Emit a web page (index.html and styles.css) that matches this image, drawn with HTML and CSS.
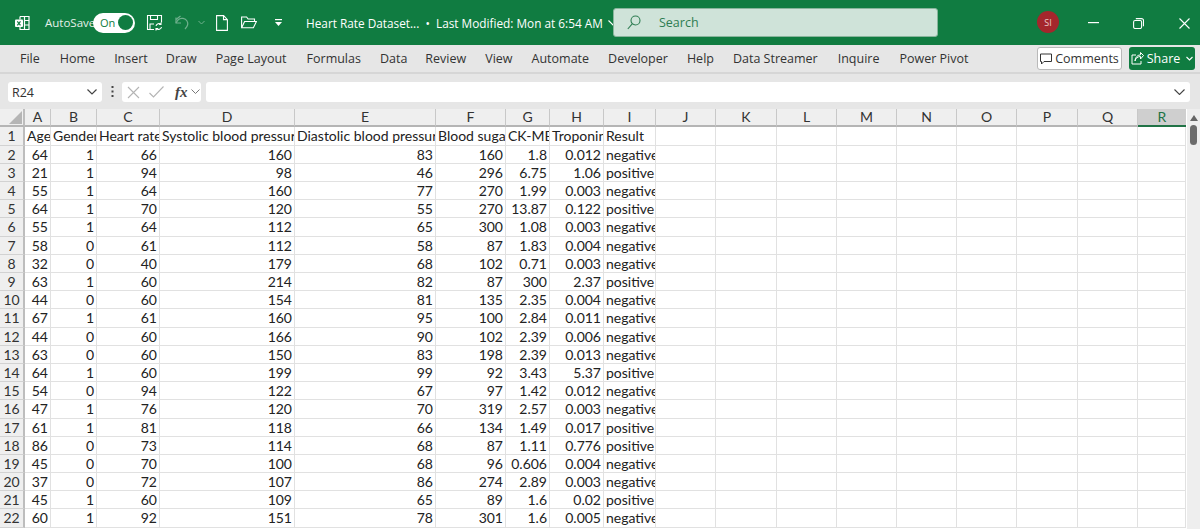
FILE: index.html
```html
<!DOCTYPE html>
<html lang="en">
<head>
<meta charset="utf-8">
<title>Heart Rate Dataset - Excel</title>
<link rel="stylesheet" href="styles.css">
</head>
<body>
<div class="app">
<header class="titlebar">
  <svg class="ico-app" width="18" height="18" viewBox="0 0 18 18" fill="none" stroke="#fff" stroke-width="1.2"><path d="M6 2.5h9v13H6v-3"/><path d="M6 2.5v3M10.500 2.500v13M10.500 6.500H15M10.500 11H15"/><rect x="1" y="5.500" width="8" height="7.500" rx="1" fill="#fff" stroke="none"/><path d="M3.300 7.300l3.200 4M6.500 7.300l-3.200 4" stroke="#107c41"/></svg>
  <span class="autosave">AutoSave</span>
  <span class="toggle"><span class="toggle-text">On</span><span class="toggle-knob"></span></span>
  <svg class="ico-save" width="17" height="17" viewBox="0 0 17 17" fill="none" stroke="#fff" stroke-width="1.100"><path d="M8 15.500H1.500v-14h14v7"/><path d="M4.500 1.500v4h7v-4M4 15v-5h4"/><path d="M10 12a3 3 0 0 1 5-1.500M15.500 13a3 3 0 0 1-5 1.500M15 8.500v2h-2M10 16.500v-2h2"/></svg>
  <svg class="ico-redo" width="16" height="16" viewBox="0 0 16 16" fill="none" stroke="#6fb08d" stroke-width="1.200"><path d="M1 4.500l4.500-3.500 0 0M10 14c3-3 3.500-5.500 2-8S6 2 3 5L1 8"/><path d="M1 2.500V8h5"/></svg>
  <svg class="ico-chev-dim" width="7" height="5" viewBox="0 0 7 5" fill="none" stroke="#6fb08d"><path d="M.5 1l3 3 3-3"/></svg>
  <svg class="ico-new" width="12" height="16" viewBox="0 0 12 16" fill="none" stroke="#fff" stroke-width="1.100"><path d="M.6.600h7l3.800 4v10.800H.6zM7.500.600v4h3.900"/></svg>
  <svg class="ico-open" width="16" height="13" viewBox="0 0 16 13" fill="none" stroke="#fff" stroke-width="1.100"><path d="M.6 11.500V1h5l1.500 2h6.400v2.500"/><path d="M.6 11.800l3-6.300h11.800l-3 6.300z"/></svg>
  <svg class="ico-more" width="9" height="8" viewBox="0 0 9 8" fill="#fff"><rect x="1" y="0" width="7" height="1.200"/><path d="M1 3h7L4.500 7z"/></svg>
  <span class="doc-title">Heart Rate Dataset...&nbsp; •&nbsp; Last Modified: Mon at 6:54 AM</span>
  <svg class="ico-chev-title" width="10" height="6" viewBox="0 0 10 6" fill="none" stroke="#fff" stroke-width="1.100"><path d="M.5.500l4.500 4.500 4.500-4.500"/></svg>
  <div class="search">
    <svg width="14" height="15" viewBox="0 0 14 15" fill="none" stroke="#2e7d52" stroke-width="1.100"><circle cx="8.500" cy="5.500" r="4.500"/><path d="M5.200 8.800L.8 14"/></svg>
    <span>Search</span>
  </div>
  <span class="avatar">SI</span>
  <svg class="ico-min" width="11" height="2" viewBox="0 0 11 2" fill="#fff"><rect width="11" height="1.200"/></svg>
  <svg class="ico-restore" width="11" height="11" viewBox="0 0 11 11" fill="none" stroke="#fff" stroke-width="1.100"><rect x=".6" y="2.500" width="8" height="8" rx="1.500"/><path d="M2.800.6h5.700a2 2 0 0 1 2 2v5.700"/></svg>
  <svg class="ico-close" width="11" height="11" viewBox="0 0 11 11" fill="none" stroke="#fff" stroke-width="1.100"><path d="M.5.500l10 10M10.500.500l-10 10"/></svg>
</header>

<nav class="tabs">
  <span class="tab t-file">File</span>
  <span class="tab t-home">Home</span>
  <span class="tab t-insert">Insert</span>
  <span class="tab t-draw">Draw</span>
  <span class="tab t-layout">Page Layout</span>
  <span class="tab t-formulas">Formulas</span>
  <span class="tab t-data">Data</span>
  <span class="tab t-review">Review</span>
  <span class="tab t-view">View</span>
  <span class="tab t-automate">Automate</span>
  <span class="tab t-dev">Developer</span>
  <span class="tab t-help">Help</span>
  <span class="tab t-stream">Data Streamer</span>
  <span class="tab t-inquire">Inquire</span>
  <span class="tab t-pivot">Power Pivot</span>
  <button class="btn-comments"><svg width="12" height="12" viewBox="0 0 12 12" fill="none" stroke="#333" stroke-width="1"><path d="M.5 1h11v7.500H4L1.500 11V8.500h-1z"/></svg>Comments</button>
  <button class="btn-share"><svg width="13" height="13" viewBox="0 0 13 13" fill="none" stroke="#fff" stroke-width="1"><path d="M5 3H1v9h9V9"/><path d="M4 9c.500-3 3-4.500 5.500-4.500V7L12.500 3.500 9.500.5v2.300C6 3 4 6 4 9z"/></svg>Share<svg class="share-chev" width="7" height="5" viewBox="0 0 7 5" fill="none" stroke="#fff" stroke-width="1.100"><path d="M.5 1l3 3 3-3"/></svg></button>
</nav>

<section class="formula">
  <div class="namebox"><span>R24</span><svg width="10" height="6" viewBox="0 0 10 6" fill="none" stroke="#444" stroke-width="1.200"><path d="M.5.500l4.500 4.500 4.500-4.500"/></svg></div>
  <svg class="dots" width="3" height="11" viewBox="0 0 3 11" fill="#444"><rect x=".5" width="2" height="2"/><rect x=".5" y="4.500" width="2" height="2"/><rect x=".5" y="9" width="2" height="2"/></svg>
  <div class="fxbox">
    <svg width="13" height="13" viewBox="0 0 13 13" fill="none" stroke="#b4b4b4" stroke-width="1.100"><path d="M1 1l11 11M12 1L1 12"/></svg>
    <svg width="15" height="12" viewBox="0 0 15 12" fill="none" stroke="#b4b4b4" stroke-width="1.100"><path d="M.5 7l4 4L14.500.5"/></svg>
    <span class="fx">fx</span>
    <svg width="9" height="6" viewBox="0 0 9 6" fill="none" stroke="#777" stroke-width="1"><path d="M.5.500l4 4 4-4"/></svg>
  </div>
  <div class="inputbox"><svg width="11" height="6" viewBox="0 0 11 6" fill="none" stroke="#444" stroke-width="1.100"><path d="M.5.500l5 5 5-5"/></svg></div>
</section>

<main class="sheet">
  <div class="grid">
    <div class="row head">
      <span class="corner"><svg width="13" height="13" viewBox="0 0 13 13" fill="#b5b5b5"><path d="M13 0v13H0z"/></svg></span>
      <b>A</b><b>B</b><b>C</b><b>D</b><b>E</b><b>F</b><b>G</b><b>H</b><b>I</b><b>J</b><b>K</b><b>L</b><b>M</b><b>N</b><b>O</b><b>P</b><b>Q</b><b class="sel">R</b>
    </div>
    <div class="row r1"><em>1</em><span>Age</span><span>Gender</span><span>Heart rate</span><span>Systolic blood pressure</span><span>Diastolic blood pressure</span><span>Blood sugar</span><span>CK-MB</span><span>Troponin</span><span>Result</span><i></i><i></i><i></i><i></i><i></i><i></i><i></i><i></i><i></i></div>
    <div class="row"><em>2</em><u>64</u><u>1</u><u>66</u><u>160</u><u>83</u><u>160</u><u>1.8</u><u>0.012</u><span>negative</span><i></i><i></i><i></i><i></i><i></i><i></i><i></i><i></i><i></i></div>
    <div class="row"><em>3</em><u>21</u><u>1</u><u>94</u><u>98</u><u>46</u><u>296</u><u>6.75</u><u>1.06</u><span>positive</span><i></i><i></i><i></i><i></i><i></i><i></i><i></i><i></i><i></i></div>
    <div class="row"><em>4</em><u>55</u><u>1</u><u>64</u><u>160</u><u>77</u><u>270</u><u>1.99</u><u>0.003</u><span>negative</span><i></i><i></i><i></i><i></i><i></i><i></i><i></i><i></i><i></i></div>
    <div class="row"><em>5</em><u>64</u><u>1</u><u>70</u><u>120</u><u>55</u><u>270</u><u>13.87</u><u>0.122</u><span>positive</span><i></i><i></i><i></i><i></i><i></i><i></i><i></i><i></i><i></i></div>
    <div class="row"><em>6</em><u>55</u><u>1</u><u>64</u><u>112</u><u>65</u><u>300</u><u>1.08</u><u>0.003</u><span>negative</span><i></i><i></i><i></i><i></i><i></i><i></i><i></i><i></i><i></i></div>
    <div class="row"><em>7</em><u>58</u><u>0</u><u>61</u><u>112</u><u>58</u><u>87</u><u>1.83</u><u>0.004</u><span>negative</span><i></i><i></i><i></i><i></i><i></i><i></i><i></i><i></i><i></i></div>
    <div class="row"><em>8</em><u>32</u><u>0</u><u>40</u><u>179</u><u>68</u><u>102</u><u>0.71</u><u>0.003</u><span>negative</span><i></i><i></i><i></i><i></i><i></i><i></i><i></i><i></i><i></i></div>
    <div class="row"><em>9</em><u>63</u><u>1</u><u>60</u><u>214</u><u>82</u><u>87</u><u>300</u><u>2.37</u><span>positive</span><i></i><i></i><i></i><i></i><i></i><i></i><i></i><i></i><i></i></div>
    <div class="row"><em>10</em><u>44</u><u>0</u><u>60</u><u>154</u><u>81</u><u>135</u><u>2.35</u><u>0.004</u><span>negative</span><i></i><i></i><i></i><i></i><i></i><i></i><i></i><i></i><i></i></div>
    <div class="row"><em>11</em><u>67</u><u>1</u><u>61</u><u>160</u><u>95</u><u>100</u><u>2.84</u><u>0.011</u><span>negative</span><i></i><i></i><i></i><i></i><i></i><i></i><i></i><i></i><i></i></div>
    <div class="row"><em>12</em><u>44</u><u>0</u><u>60</u><u>166</u><u>90</u><u>102</u><u>2.39</u><u>0.006</u><span>negative</span><i></i><i></i><i></i><i></i><i></i><i></i><i></i><i></i><i></i></div>
    <div class="row"><em>13</em><u>63</u><u>0</u><u>60</u><u>150</u><u>83</u><u>198</u><u>2.39</u><u>0.013</u><span>negative</span><i></i><i></i><i></i><i></i><i></i><i></i><i></i><i></i><i></i></div>
    <div class="row"><em>14</em><u>64</u><u>1</u><u>60</u><u>199</u><u>99</u><u>92</u><u>3.43</u><u>5.37</u><span>positive</span><i></i><i></i><i></i><i></i><i></i><i></i><i></i><i></i><i></i></div>
    <div class="row"><em>15</em><u>54</u><u>0</u><u>94</u><u>122</u><u>67</u><u>97</u><u>1.42</u><u>0.012</u><span>negative</span><i></i><i></i><i></i><i></i><i></i><i></i><i></i><i></i><i></i></div>
    <div class="row"><em>16</em><u>47</u><u>1</u><u>76</u><u>120</u><u>70</u><u>319</u><u>2.57</u><u>0.003</u><span>negative</span><i></i><i></i><i></i><i></i><i></i><i></i><i></i><i></i><i></i></div>
    <div class="row"><em>17</em><u>61</u><u>1</u><u>81</u><u>118</u><u>66</u><u>134</u><u>1.49</u><u>0.017</u><span>positive</span><i></i><i></i><i></i><i></i><i></i><i></i><i></i><i></i><i></i></div>
    <div class="row"><em>18</em><u>86</u><u>0</u><u>73</u><u>114</u><u>68</u><u>87</u><u>1.11</u><u>0.776</u><span>positive</span><i></i><i></i><i></i><i></i><i></i><i></i><i></i><i></i><i></i></div>
    <div class="row"><em>19</em><u>45</u><u>0</u><u>70</u><u>100</u><u>68</u><u>96</u><u>0.606</u><u>0.004</u><span>negative</span><i></i><i></i><i></i><i></i><i></i><i></i><i></i><i></i><i></i></div>
    <div class="row"><em>20</em><u>37</u><u>0</u><u>72</u><u>107</u><u>86</u><u>274</u><u>2.89</u><u>0.003</u><span>negative</span><i></i><i></i><i></i><i></i><i></i><i></i><i></i><i></i><i></i></div>
    <div class="row"><em>21</em><u>45</u><u>1</u><u>60</u><u>109</u><u>65</u><u>89</u><u>1.6</u><u>0.02</u><span>positive</span><i></i><i></i><i></i><i></i><i></i><i></i><i></i><i></i><i></i></div>
    <div class="row"><em>22</em><u>60</u><u>1</u><u>92</u><u>151</u><u>78</u><u>301</u><u>1.6</u><u>0.005</u><span>negative</span><i></i><i></i><i></i><i></i><i></i><i></i><i></i><i></i><i></i></div>
  </div>
  <aside class="scroll">
    <svg width="8" height="6" viewBox="0 0 8 6" fill="#666"><path d="M4 0l4 6H0z"/></svg>
    <span class="thumb"></span>
  </aside>
</main>
</div>
</body>
</html>
```
FILE: styles.css
```css
* { box-sizing: border-box; }
html, body { margin: 0; height: 100%; overflow: hidden; background: #fff; }
body { font-family: "Open Sans", "Noto Sans", sans-serif; color: #333; }
.app { width: 1200px; height: 529px; display: flex; flex-direction: column; overflow: hidden; }

/* title bar */
.titlebar { height: 45px; flex: none; background: #107c41; color: #fff; display: flex; align-items: center; padding-left: 14px; }
.autosave { margin-left: 13px; font-size: 11.500px; width: 48px; color: #e4f0e9; }
.toggle { width: 42px; height: 20px; margin-left: 0; border-radius: 10px; background: #fff; display: flex; align-items: center; justify-content: space-between; padding: 0 2px 0 7px; }
.toggle-text { color: #107c41; font-size: 11px; }
.toggle-knob { width: 15px; height: 15px; border-radius: 50%; background: #107c41; }
.ico-save { margin-left: 11px; }
.ico-redo { margin-left: 12px; }
.ico-chev-dim { margin-left: 7px; }
.ico-new { margin-left: 11px; }
.ico-open { margin-left: 13px; }
.ico-more { margin-left: 17px; }
.doc-title { margin-left: 23px; font-size: 11.800px; white-space: nowrap; }
.ico-chev-title { margin-left: 5px; }
.search { position: absolute; left: 613px; top: 8px; width: 325px; height: 29px; border-radius: 3px; background: #cfe3d9; border: 1px solid #88b59c; display: flex; align-items: center; gap: 18px; padding-left: 13px; color: #2e7d52; font-size: 12.500px; }
.avatar { position: absolute; left: 1037px; top: 11px; width: 22px; height: 22px; border-radius: 50%; background: #a4262c; color: #e8c9c9; font-size: 9px; display: flex; align-items: center; justify-content: center; }
.ico-min { position: absolute; left: 1088px; top: 22px; }
.ico-restore { position: absolute; left: 1133px; top: 18px; }
.ico-close { position: absolute; left: 1179px; top: 18px; }

/* ribbon tabs */
.tabs { height: 29px; flex: none; background: #e6e6e6; border-bottom: 2px solid #d6d6d6; position: relative; font-size: 12.500px; color: #333; display: flex; align-items: center; }
.tab { white-space: nowrap; }
.t-file { margin-left: 20px; }
.t-home { margin-left: 20px; }
.t-insert { margin-left: 19px; }
.t-draw { margin-left: 18px; }
.t-layout { margin-left: 19px; }
.t-formulas { margin-left: 20px; }
.t-data { margin-left: 19px; }
.t-review { margin-left: 18px; }
.t-view { margin-left: 19px; }
.t-automate { margin-left: 19px; }
.t-dev { margin-left: 19px; }
.t-help { margin-left: 19px; }
.t-stream { margin-left: 19px; }
.t-inquire { margin-left: 20px; }
.t-pivot { margin-left: 20px; }
.btn-comments, .btn-share { font: inherit; height: 23px; display: flex; align-items: center; gap: 3px; border-radius: 3px; padding: 0; justify-content: center; }
.btn-comments { margin-left: auto; width: 85px; background: #fff; border: 1px solid #b9b9b9; color: #333; }
.btn-share { margin: 0 5px 0 7px; width: 66px; background: #107c41; border: 0; color: #fff; }
.share-chev { margin-left: 3px; }

/* formula bar */
.formula { height: 35px; flex: none; background: #e6e6e6; display: flex; align-items: flex-start; padding: 8px 10px 0 8px; }
.namebox, .fxbox, .inputbox { height: 20px; background: #fff; border-radius: 3px; display: flex; align-items: center; }
.namebox { width: 94px; justify-content: space-between; padding: 0 5px 0 4px; font-size: 12.500px; color: #333; }
.dots { margin: 4px 8px 0 9px; }
.fxbox { width: 79px; padding-left: 5px; }
.fxbox svg:nth-child(2) { margin-left: 9px; }
.fx { margin-left: 11px; margin-right: 2px; width: 14px; font-family: "Liberation Serif", serif; font-style: italic; font-size: 15px; color: #444; font-weight: 700; }
.inputbox { flex: 1; margin-left: 5px; justify-content: flex-end; padding-right: 5px; }

/* sheet */
.sheet { flex: 1; display: flex; min-height: 0; overflow: hidden; position: relative; background: #fff; }
.grid { flex: none; width: 1187px; font-family: "Lato", "Carlito", sans-serif; font-size: 14px; color: #222; }
.row { display: grid; height: 18.200px; grid-template-columns: 25px 26px 46px 63px 135px 141px 70px 44px 54px 52px 60px 61px 60px 60px 60px 60px 61px 60px 48px; }
.row > * { font-style: normal; text-decoration: none; font-weight: 400; display: block; line-height: 17px; white-space: nowrap; overflow: hidden; border-right: 1px solid #e1e1e1; border-bottom: 1px solid #e1e1e1; }
.row > span, .row > u { padding: 0 2px; }
.row > u { text-align: right; }
.row > em { text-align: center; background: #efefef; border-right: 2px solid #bdbdbd; border-bottom-color: #d2d2d2; color: #333; }
.row.head { height: 18px; margin-bottom: 0; }
.row.head > * { background: #efefef; text-align: center; border-right: 1px solid #c8c8c8; border-bottom: 2px solid #b5b5b5; line-height: 16px; color: #333; padding: 0; }
.row.head > .corner { border-right: 2px solid #bdbdbd; display: flex; justify-content: flex-end; align-items: flex-end; padding: 0 1px 1px 0; }
.row.head > .sel { background: #cfcfcf; color: #217346; border-bottom-color: #217346; border-right: 0; text-align: center; }
.row.r1 { height: 18.700px; }
.scroll { position: absolute; right: 0; top: 0; bottom: 0; width: 13px; background: #eee; display: flex; flex-direction: column; align-items: center; padding-top: 6px; gap: 4px; }
.thumb { width: 7px; height: 20px; border-radius: 4px; background: #6b6b6b; }
```
